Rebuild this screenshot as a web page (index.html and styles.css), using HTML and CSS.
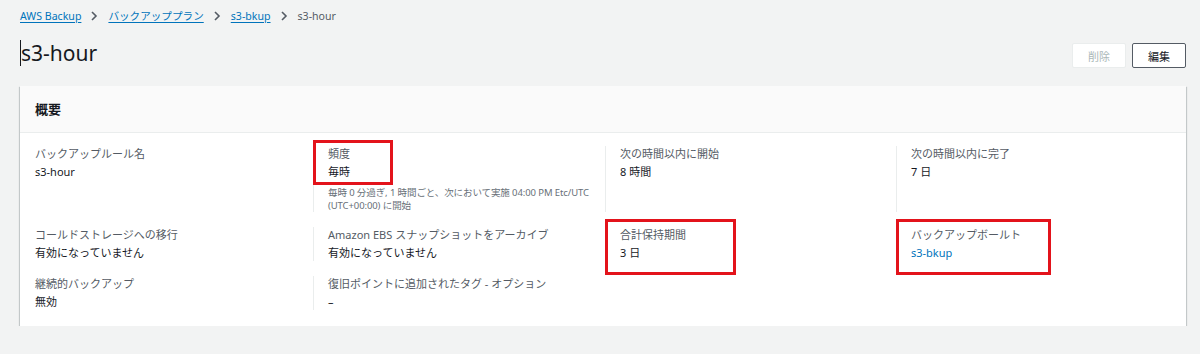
FILE: index.html
```html
<!DOCTYPE html>
<html lang="ja">
<head>
    <meta charset="UTF-8">
    <title>s3-hour - AWS Backup</title>
    <link rel="stylesheet" href="styles.css">
</head>
<body>
    <div class="page">
        <nav class="crumbs">
            <a href="#">AWS Backup</a>
            <svg class="chev" width="8" height="10" viewBox="0 0 8 10"><path d="M2 1l4 4-4 4" fill="none" stroke="#545b64" stroke-width="1.6"/></svg>
            <a href="#">バックアッププラン</a>
            <svg class="chev" width="8" height="10" viewBox="0 0 8 10"><path d="M2 1l4 4-4 4" fill="none" stroke="#545b64" stroke-width="1.6"/></svg>
            <a href="#">s3-bkup</a>
            <svg class="chev" width="8" height="10" viewBox="0 0 8 10"><path d="M2 1l4 4-4 4" fill="none" stroke="#545b64" stroke-width="1.6"/></svg>
            <span class="current">s3-hour</span>
        </nav>

        <div class="title-row">
            <h1>s3-hour</h1>
            <div class="actions">
                <button class="btn" disabled>削除</button>
                <button class="btn">編集</button>
            </div>
        </div>

        <div class="card">
            <div class="card-head">概要</div>
            <div class="card-body">
                <div class="item">
                    <div class="label">バックアップルール名</div>
                    <div class="value">s3-hour</div>
                </div>
                <div class="item sep">
                    <div class="mark mark-freq">
                        <div class="label">頻度</div>
                        <div class="value">毎時</div>
                    </div>
                    <div class="desc">毎時 0 分過ぎ, 1 時間ごと、次において実施 04:00 PM Etc/UTC (UTC+00:00) に開始</div>
                </div>
                <div class="item sep">
                    <div class="label">次の時間以内に開始</div>
                    <div class="value">8 時間</div>
                </div>
                <div class="item sep">
                    <div class="label">次の時間以内に完了</div>
                    <div class="value">7 日</div>
                </div>

                <div class="item">
                    <div class="label">コールドストレージへの移行</div>
                    <div class="value">有効になっていません</div>
                </div>
                <div class="item sep">
                    <div class="label">Amazon EBS スナップショットをアーカイブ</div>
                    <div class="value">有効になっていません</div>
                </div>
                <div class="item sep">
                    <div class="mark mark-box mark-retain">
                        <div class="label">合計保持期間</div>
                        <div class="value">3 日</div>
                    </div>
                </div>
                <div class="item sep">
                    <div class="mark mark-box mark-vault">
                        <div class="label">バックアップボールト</div>
                        <div class="value"><a href="#">s3-bkup</a></div>
                    </div>
                </div>

                <div class="item">
                    <div class="label">継続的バックアップ</div>
                    <div class="value">無効</div>
                </div>
                <div class="item sep">
                    <div class="label">復旧ポイントに追加されたタグ - オプション</div>
                    <div class="value">–</div>
                </div>
            </div>
        </div>
    </div>
</body>
</html>
```

FILE: styles.css
```css
body { margin: 0; background: #f2f3f3; color: #16191f; font-family: "Noto Sans", "Noto Sans CJK JP", sans-serif; font-size: 11px; }
a { color: #0073bb; text-decoration: none; }

.page { padding: 8px 14px 0 20px; }

.crumbs { display: flex; align-items: center; height: 16px; line-height: 16px; font-size: 10.6px; }
.crumbs a { text-decoration: underline; text-underline-offset: 2px; }
.crumbs .chev { margin: 0 10px 0 9px; }
.crumbs .current { color: #545b64; }

.title-row { display: flex; justify-content: space-between; align-items: center; margin-top: 14px; height: 30px; }
.title-row h1 { margin: 0; font-size: 21px; font-weight: 400; line-height: 26px; border-left: 1px solid #16191f; }
.actions { display: flex; gap: 6px; padding-top: 5px; }
.btn { width: 54px; height: 25px; padding: 0; background: #fff; border: 1px solid #545b64; border-radius: 2px; color: #16191f; font-family: inherit; font-size: 11px; cursor: pointer; }
.btn:disabled { border-color: #eaeded; color: #aab7b8; cursor: default; }

.card { margin-top: 18px; background: #fff; box-shadow: 0 1px 1px 0 rgba(0, 28, 36, 0.3), 1px 1px 1px 0 rgba(0, 28, 36, 0.15), -1px 1px 1px 0 rgba(0, 28, 36, 0.15); }
.card-head { height: 46px; line-height: 46px; padding: 0 15px; background: #fafafa; border-bottom: 1px solid #eaeded; font-size: 13px; font-weight: 700; }
.card-body { display: grid; grid-template-columns: 293px 292px 291px 1fr; row-gap: 15px; padding: 13px 0 16px; }

.item { padding: 0 15px; }
.item.sep { border-left: 1px solid #eaeded; padding-left: 14px; }
.label { color: #545b64; line-height: 16px; }
.value { margin-top: 2px; line-height: 16px; }
.desc { margin-top: 3px; padding-right: 0; color: #687078; font-size: 9.5px; line-height: 13px; letter-spacing: -0.1px; }

.mark { border: 3px solid #e3131b; margin: -6px 0 -2px -15px; padding: 3px 0 2px 12px; box-sizing: border-box; }
.mark-freq { width: 80px; }
.mark-box { margin: -8px 0 -14px -15px; padding: 5px 0 11px 12px; }
.mark-retain { width: 131px; }
.mark-vault { width: 155px; }
```
